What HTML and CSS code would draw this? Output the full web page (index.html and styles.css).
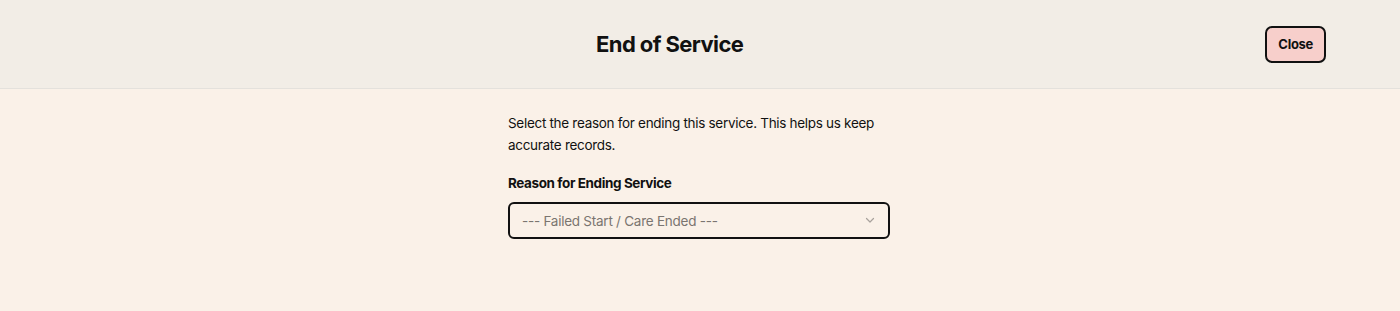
FILE: index.html
```html
<!DOCTYPE html>
<html lang="en">
<head>
    <meta charset="UTF-8">
    <meta name="viewport" content="width=device-width, initial-scale=1.0">
    <title>End of Service</title>
    <link rel="stylesheet" href="styles.css">
</head>
<body>
    <header class="modal-header">
        <h1 class="modal-title">End of Service</h1>
        <button class="close-btn">Close</button>
    </header>

    <main class="modal-body">
        <div class="form-column">
            <p class="intro">Select the reason for ending this service. This helps us keep accurate records.</p>

            <div class="form-group">
                <label for="reason">Reason for Ending Service</label>
                <div class="select-wrap">
                    <select id="reason">
                        <option value="">--- Failed Start / Care Ended ---</option>
                    </select>
                    <svg class="chevron" width="12" height="12" viewBox="0 0 12 12" fill="none" stroke="currentColor" stroke-width="1.2" stroke-linecap="round" stroke-linejoin="round">
                        <polyline points="2.5,4.5 6,8 9.5,4.5"></polyline>
                    </svg>
                </div>
            </div>
        </div>
    </main>
</body>
</html>
```

FILE: styles.css
```css
:root {
    --header-bg: #f2ede6;
    --body-bg: #faf1e8;
    --ink: #111111;
    --muted: #7a7570;
    --line: #e4e1dc;
    --close-bg: #f7cfcb;
}

body {
    margin: 0;
    padding: 0;
    font-family: Inter, "Noto Sans", sans-serif;
    background-color: var(--body-bg);
    color: var(--ink);
    min-height: 100vh;
}

.modal-header {
    display: flex;
    align-items: center;
    height: 89px;
    padding: 0 74px;
    background: var(--header-bg);
    border-bottom: 1px solid var(--line);
    box-sizing: border-box;
}

.modal-title {
    flex: 1;
    margin: 0;
    text-align: center;
    font-size: 22px;
    font-weight: 700;
    letter-spacing: -0.6px;
}

.close-btn {
    height: 37px;
    padding: 0 11px;
    background: var(--close-bg);
    border: 2px solid var(--ink);
    border-radius: 7px;
    font-family: inherit;
    font-size: 13px;
    font-weight: 700;
    letter-spacing: -0.3px;
    color: var(--ink);
    cursor: pointer;
}

.modal-body {
    display: flex;
    justify-content: center;
    padding: 23px 0;
}

.form-column {
    width: 382px;
    margin-left: -2px;
}

.intro {
    margin: 0 0 19px;
    font-size: 13.5px;
    line-height: 22px;
    letter-spacing: -0.3px;
}

label {
    display: block;
    margin-bottom: 11px;
    font-size: 13.5px;
    font-weight: 700;
    letter-spacing: -0.4px;
}

.select-wrap {
    position: relative;
}

select {
    width: 100%;
    height: 37px;
    padding: 0 12px;
    border: 2px solid var(--ink);
    border-radius: 6px;
    background: var(--body-bg);
    color: var(--muted);
    font-family: inherit;
    font-size: 13.5px;
    letter-spacing: -0.25px;
    appearance: none;
    -webkit-appearance: none;
    box-sizing: border-box;
}

.chevron {
    position: absolute;
    right: 14px;
    top: 12px;
    color: #a8a29c;
    pointer-events: none;
}
```
